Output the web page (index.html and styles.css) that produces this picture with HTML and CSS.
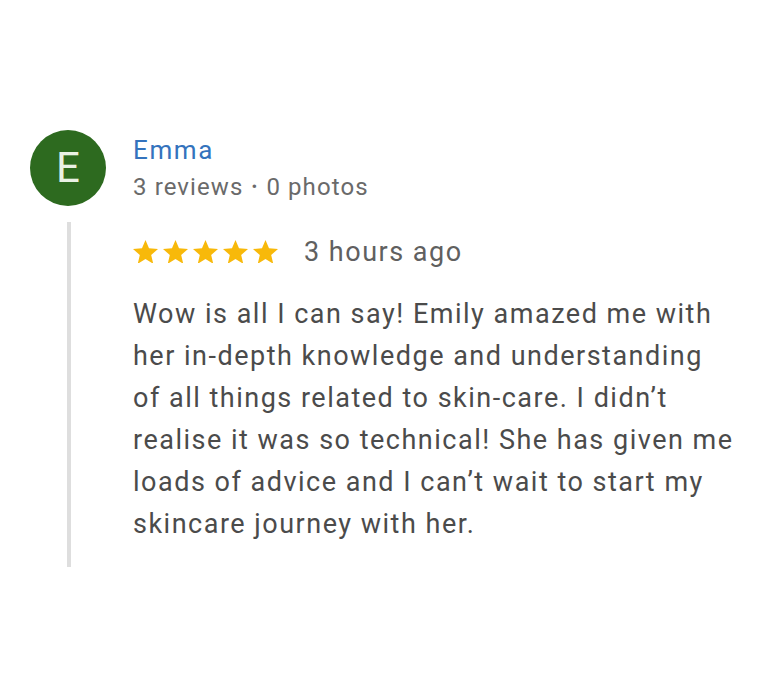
FILE: index.html
```html
<!DOCTYPE html>
<html lang="en">
<head>
<meta charset="utf-8">
<title>Review</title>
<link rel="stylesheet" href="styles.css">
</head>
<body>
<div class="review">
  <div class="head">
    <div class="avatar">E</div>
    <div class="who">
      <div class="name">Emma</div>
      <div class="meta">3 reviews <span class="dot">•</span> 0 photos</div>
    </div>
  </div>
  <div class="body">
    <div class="rail"></div>
    <div class="content">
      <div class="rating">
        <div class="stars">
          <svg class="star" viewBox="2 2 20 19"><path d="M12 17.27L18.18 21l-1.64-7.03L22 9.24l-7.19-.61L12 2 9.19 8.63 2 9.24l5.46 4.73L5.82 21z"/></svg>
          <svg class="star" viewBox="2 2 20 19"><path d="M12 17.27L18.18 21l-1.64-7.03L22 9.24l-7.19-.61L12 2 9.19 8.63 2 9.24l5.46 4.73L5.82 21z"/></svg>
          <svg class="star" viewBox="2 2 20 19"><path d="M12 17.27L18.18 21l-1.64-7.03L22 9.24l-7.19-.61L12 2 9.19 8.63 2 9.24l5.46 4.73L5.82 21z"/></svg>
          <svg class="star" viewBox="2 2 20 19"><path d="M12 17.27L18.18 21l-1.64-7.03L22 9.24l-7.19-.61L12 2 9.19 8.63 2 9.24l5.46 4.73L5.82 21z"/></svg>
          <svg class="star" viewBox="2 2 20 19"><path d="M12 17.27L18.18 21l-1.64-7.03L22 9.24l-7.19-.61L12 2 9.19 8.63 2 9.24l5.46 4.73L5.82 21z"/></svg>
        </div>
        <span class="when">3 hours ago</span>
      </div>
      <p class="text">Wow is all I can say! Emily amazed me with<br>her in-depth knowledge and understanding<br>of all things related to skin-care. I didn’t<br>realise it was so technical! She has given me<br>loads of advice and I can’t wait to start my<br>skincare journey with her.</p>
    </div>
  </div>
</div>
</body>
</html>
```
FILE: styles.css
```css
html, body {
  margin: 0;
  padding: 0;
  background: #ffffff;
}
body {
  width: 768px;
  height: 692px;
  overflow: hidden;
  font-family: Roboto, "Liberation Sans", sans-serif;
}
.review {
  padding: 130px 0 0 30px;
}
.head {
  display: flex;
  align-items: flex-start;
  gap: 27px;
}
.avatar {
  width: 76px;
  height: 76px;
  border-radius: 50%;
  background: #2d6a1f;
  color: #e9f1e4;
  font-size: 42px;
  line-height: 76px;
  text-align: center;
  flex: none;
}
.who {
  display: flex;
  flex-direction: column;
  gap: 8px;
  padding-top: 6px;
}
.name {
  font-size: 26px;
  line-height: 29px;
  letter-spacing: 1.6px;
  color: #3473bd;
}
.meta {
  font-size: 24px;
  line-height: 26px;
  letter-spacing: 1.1px;
  color: #6a6a6a;
}
.dot {
  font-size: 17px;
  vertical-align: 3px;
  margin: 0 1px;
}
.body {
  display: flex;
  margin-top: 16px;
}
.rail {
  width: 4px;
  background: #dedede;
  margin-left: 37px;
  flex: none;
}
.content {
  margin-left: 62px;
  padding-top: 18px;
  padding-bottom: 22px;
}
.rating {
  display: flex;
  align-items: center;
  gap: 26px;
  height: 23px;
}
.stars {
  display: flex;
  gap: 5px;
}
.star {
  width: 25px;
  height: 23.75px;
  fill: #f8b90a;
  display: block;
}
.when {
  font-size: 27px;
  line-height: 29px;
  letter-spacing: 1.5px;
  padding-top: 2px;
  color: #606060;
}
.text {
  margin: 30px 0 0 0;
  font-size: 27px;
  line-height: 42px;
  letter-spacing: 1.5px;
  color: #4b4b4b;
}
```
